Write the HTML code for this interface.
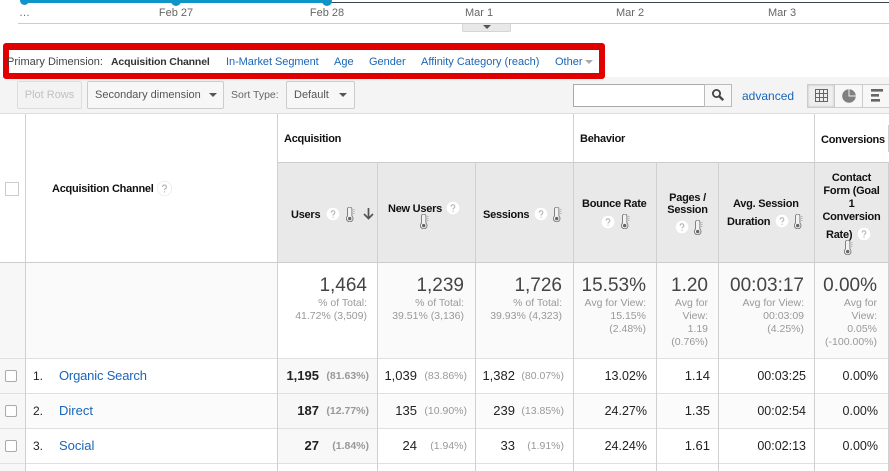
<!DOCTYPE html>
<html><head><meta charset="utf-8"><style>
html,body{margin:0;padding:0;background:#fff}
#p{position:relative;width:889px;height:471px;overflow:hidden;background:#fff;font-family:"Liberation Sans",Arial,sans-serif;color:#222}
#p div,#p span.a,#p svg.a{position:absolute}
.t{white-space:nowrap;line-height:14px;font-size:13px}
.b{font-weight:bold;font-size:11px;letter-spacing:-.25px;color:#111}
.c{text-align:center}
.ax{font-size:11px;color:#666;width:60px;text-align:center;top:6px}
.l{color:#1a66b8}
.rl{letter-spacing:-.18px}
.n{font-size:12.5px}
.big{font-size:19px;line-height:22px;color:#444;white-space:nowrap}
.sub{font-size:10.5px;line-height:13px;color:#999;text-align:right;white-space:nowrap}
.v{background:#d0d0d0;width:1px}
.h{background:#e0e0e0;height:1px;left:0;width:889px}
.pc{font-size:10.5px;color:#999;white-space:nowrap;line-height:14px}
.cb{width:10px;height:10px;border:1px solid #aaa;border-radius:2px;left:5px;background:#fff}
.btn{border:1px solid #ccc;border-radius:2px;box-sizing:border-box;height:28px;top:81px;font-size:11px;line-height:26px;color:#555;background:#f7f7f7}
.tri{width:0;height:0;border-left:4px solid transparent;border-right:4px solid transparent;border-top:4px solid #555}
</style></head><body><div id="p">
<svg width="0" height="0" style="position:absolute"><defs>
<symbol id="q" viewBox="0 0 14 14"><circle cx="7" cy="7" r="6.7" fill="#fff" stroke="#e6e6e6" stroke-width=".6"/><path d="M5.200 5.600a1.800 1.800 0 1 1 2.700 1.500c-.6.4-.9.7-.9 1.400" fill="none" stroke="#b0b0b0" stroke-width="1"/><circle cx="7" cy="10.200" r=".6" fill="#b0b0b0"/></symbol>
<symbol id="th" viewBox="0 0 9 15"><path d="M1.500 2.200a2.200 2.200 0 0 1 4.400 0v6.900a3.300 3.300 0 1 1-4.400 0z" fill="#f2f2f2" stroke="#777" stroke-width=".9"/><circle cx="3.700" cy="11.600" r="1.700" fill="#666"/><path d="M7 2.500h1.600M7 4.500h1.600M7 6.500h1.600" stroke="#aaa" stroke-width=".8"/></symbol>
</defs></svg>

<!-- chart -->
<div style="left:327px;top:2px;width:562px;height:1px;background:#3a4450"></div>
<div style="left:24px;top:0;width:303px;height:3px;background:#0f94c8"></div>
<div style="left:20px;top:-4px;width:9px;height:9px;border-radius:50%;background:#0f94c8"></div>
<div style="left:171px;top:-4px;width:10px;height:10px;border-radius:50%;background:#0f94c8"></div>
<div style="left:322px;top:-4px;width:10px;height:10px;border-radius:50%;background:#0f94c8"></div>
<div style="left:18px;top:23px;width:871px;height:1px;background:#ccc"></div>
<div class="t" style="left:19px;top:6px;font-size:11px;color:#666">…</div>
<div class="t ax" style="left:146px">Feb 27</div>
<div class="t ax" style="left:297px">Feb 28</div>
<div class="t ax" style="left:449px">Mar 1</div>
<div class="t ax" style="left:600px">Mar 2</div>
<div class="t ax" style="left:752px">Mar 3</div>
<div style="left:462px;top:24px;width:49px;height:8px;background:#e8e8e8;border:1px solid #d5d5d5;border-top:0;border-radius:0 0 2px 2px;box-sizing:border-box"></div>
<div class="tri" style="left:483px;top:25px;border-top-color:#555"></div>

<!-- toolbar -->
<div style="left:0;top:77px;width:889px;height:36px;background:#f4f4f4"></div>
<div style="left:0;top:113px;width:889px;height:1px;background:#ddd"></div>
<div class="btn c" style="left:17px;width:65px;color:#c0c0c0;background:#f3f3f3;border-color:#ddd;line-height:27px">Plot Rows</div>
<div class="btn" style="left:87px;width:137px;padding-left:7px">Secondary dimension</div>
<div class="tri" style="left:209px;top:93px"></div>
<div class="t" style="left:231px;top:88px;font-size:10.5px;color:#666">Sort Type:</div>
<div class="btn" style="left:286px;width:69px;padding-left:7px">Default</div>
<div class="tri" style="left:339px;top:93px"></div>
<div style="left:573px;top:84px;width:132px;height:23px;background:#fff;border:1px solid #aaa;box-sizing:border-box"></div>
<div style="left:704px;top:84px;width:28px;height:23px;background:#f7f7f7;border:1px solid #bbb;box-sizing:border-box"></div>
<svg class="a" style="left:711px;top:88px" width="14" height="14" viewBox="0 0 14 14"><circle cx="5.500" cy="5.500" r="3.600" fill="none" stroke="#444" stroke-width="1.800"/><path d="M8.200 8.200l4 4" stroke="#444" stroke-width="2.400"/></svg>
<div class="t l" style="left:742px;top:89px;font-size:12px">advanced</div>
<div style="left:807px;top:84px;width:28px;height:24px;background:#eee;border:1px solid #ccc;box-sizing:border-box;box-shadow:inset 0 0 2px #bbb"></div>
<div style="left:835px;top:84px;width:28px;height:24px;background:#f7f7f7;border:1px solid #ccc;border-left:0;box-sizing:border-box"></div>
<div style="left:863px;top:84px;width:26px;height:24px;background:#f7f7f7;border-top:1px solid #ccc;border-bottom:1px solid #ccc;box-sizing:border-box"></div>
<svg class="a" style="left:815px;top:89px" width="13" height="13" viewBox="0 0 13 13"><path d="M.5.5h12v12H.5zM.5 4.500h12M.5 8.500h12M4.500.5v12M8.500.5v12" fill="none" stroke="#666"/></svg>
<svg class="a" style="left:842px;top:89px" width="14" height="14" viewBox="0 0 14 14"><circle cx="7" cy="7" r="6.800" fill="#808080"/><path d="M7 0v7h7" fill="none" stroke="#eee" stroke-width="1"/></svg>
<svg class="a" style="left:871px;top:89px" width="12" height="13" viewBox="0 0 12 13"><path d="M0 0h12v2.600H0zM0 5h8v2.600H0zM0 10h9v2.600H0z" fill="#666"/></svg>

<!-- red box -->
<div style="left:3px;top:43px;width:602px;height:36px;box-sizing:border-box;border:solid #e00000;border-width:7px 6px 6px 6px;border-radius:3px;background:#fff"></div>
<div class="t" style="left:7px;top:55px;font-size:11px;color:#444">Primary Dimension:</div>
<div class="t" style="left:111px;top:55px;font-size:10.5px;letter-spacing:-.15px;font-weight:bold;color:#333">Acquisition Channel</div>
<div class="t l" style="left:226px;top:55px;font-size:11px;letter-spacing:-.05px">In-Market Segment</div>
<div class="t l" style="left:334px;top:55px;font-size:11px">Age</div>
<div class="t l" style="left:369px;top:55px;font-size:11px">Gender</div>
<div class="t l" style="left:421px;top:55px;font-size:11px">Affinity Category (reach)</div>
<div class="t l" style="left:555px;top:55px;font-size:11px">Other</div>
<div class="tri" style="left:585px;top:60px;border-top-color:#aaa"></div>

<!-- backgrounds -->
<div style="left:277px;top:162px;width:612px;height:100px;background:#e9e9e9"></div>
<div style="left:0;top:263px;width:277px;height:95px;background:#fafafa"></div>
<div style="left:377px;top:263px;width:512px;height:95px;background:#fafafa"></div>
<div style="left:0;top:114px;width:25px;height:148px;background:#fff"></div>
<div style="left:277px;top:359px;width:100px;height:34px;background:#f8f8f8"></div>
<div style="left:26px;top:394px;width:863px;height:34px;background:#fbfbfb"></div>
<div style="left:277px;top:394px;width:100px;height:34px;background:#f7f7f7"></div>
<div style="left:277px;top:429px;width:100px;height:34px;background:#f8f8f8"></div>
<div style="left:0;top:263px;width:25px;height:208px;background:#f7f7f7"></div>

<!-- lines -->
<div class="h" style="top:262px;background:#ccc"></div>
<div class="h" style="top:358px"></div>
<div class="h" style="top:393px"></div>
<div class="h" style="top:428px"></div>
<div class="h" style="top:463px"></div>
<div style="left:277px;top:162px;width:612px;height:1px;background:#ccc"></div>
<div class="v" style="left:25px;top:114px;height:357px"></div>
<div class="v" style="left:277px;top:114px;height:357px"></div>
<div class="v" style="left:377px;top:162px;height:309px"></div>
<div class="v" style="left:475px;top:162px;height:309px"></div>
<div class="v" style="left:573px;top:114px;height:357px"></div>
<div class="v" style="left:656px;top:162px;height:309px"></div>
<div class="v" style="left:718px;top:162px;height:309px"></div>
<div class="v" style="left:814px;top:114px;height:357px"></div>
<div class="v" style="left:888px;top:125px;height:27px"></div>
<div class="v" style="left:888px;top:162px;height:309px"></div>

<!-- header -->
<div style="left:5px;top:182px;width:12px;height:12px;border:1px solid #ccc;background:#fff"></div>
<div class="t b" style="left:52px;top:182px">Acquisition Channel</div>
<svg class="a" style="left:157px;top:181px" width="15" height="15"><use href="#q"/></svg>
<div class="t b" style="left:284px;top:132px">Acquisition</div>
<div class="t b" style="left:580px;top:132px">Behavior</div>
<div class="t b" style="left:821px;top:133px">Conversions</div>

<div class="t b" style="left:291px;top:208px">Users</div>
<svg class="a" style="left:326px;top:207px" width="14" height="14"><use href="#q"/></svg>
<svg class="a" style="left:346px;top:207px" width="9" height="15"><use href="#th"/></svg>
<svg class="a" style="left:363px;top:208px" width="11" height="12" viewBox="0 0 11 12"><path d="M5.500 0v10M1 6l4.500 4.500L10 6" fill="none" stroke="#555" stroke-width="1.700"/></svg>

<div class="t b" style="left:388px;top:202px">New Users</div>
<svg class="a" style="left:446px;top:201px" width="14" height="14"><use href="#q"/></svg>
<svg class="a" style="left:420px;top:214px" width="9" height="15"><use href="#th"/></svg>

<div class="t b" style="left:483px;top:208px">Sessions</div>
<svg class="a" style="left:534px;top:207px" width="14" height="14"><use href="#q"/></svg>
<svg class="a" style="left:553px;top:207px" width="9" height="15"><use href="#th"/></svg>

<div class="t b" style="left:582px;top:197px">Bounce Rate</div>
<svg class="a" style="left:601px;top:215px" width="14" height="14"><use href="#q"/></svg>
<svg class="a" style="left:621px;top:214px" width="9" height="15"><use href="#th"/></svg>

<div class="t b c" style="left:657px;top:191px;width:61px">Pages /</div>
<div class="t b c" style="left:657px;top:203px;width:61px">Session</div>
<svg class="a" style="left:675px;top:220px" width="14" height="14"><use href="#q"/></svg>
<svg class="a" style="left:694px;top:220px" width="9" height="15"><use href="#th"/></svg>

<div class="t b" style="left:733px;top:197px">Avg. Session</div>
<div class="t b" style="left:727px;top:215px">Duration</div>
<svg class="a" style="left:775px;top:214px" width="14" height="14"><use href="#q"/></svg>
<svg class="a" style="left:794px;top:214px" width="9" height="15"><use href="#th"/></svg>

<div class="t b c" style="left:815px;top:171px;width:73px">Contact</div>
<div class="t b c" style="left:815px;top:184px;width:73px">Form (Goal</div>
<div class="t b c" style="left:815px;top:197px;width:73px">1</div>
<div class="t b c" style="left:815px;top:210px;width:73px">Conversion</div>
<div class="t b" style="left:826px;top:228px">Rate)</div>
<svg class="a" style="left:857px;top:227px" width="14" height="14"><use href="#q"/></svg>
<svg class="a" style="left:844px;top:240px" width="9" height="15"><use href="#th"/></svg>

<!-- totals -->
<div class="big" style="right:522px;top:275px">1,464</div>
<div class="sub" style="right:522px;top:297px">% of Total:<br>41.72% (3,509)</div>
<div class="big" style="right:425px;top:275px">1,239</div>
<div class="sub" style="right:425px;top:297px">% of Total:<br>39.51% (3,136)</div>
<div class="big" style="right:327px;top:275px">1,726</div>
<div class="sub" style="right:327px;top:297px">% of Total:<br>39.93% (4,323)</div>
<div class="big" style="right:243px;top:275px">15.53%</div>
<div class="sub" style="right:243px;top:297px">Avg for View:<br>15.15%<br>(2.48%)</div>
<div class="big" style="right:181px;top:275px">1.20</div>
<div class="sub" style="right:181px;top:297px">Avg for<br>View:<br>1.19<br>(0.76%)</div>
<div class="big" style="right:85px;top:275px">00:03:17</div>
<div class="sub" style="right:85px;top:297px">Avg for View:<br>00:03:09<br>(4.25%)</div>
<div class="big" style="right:12px;top:275px">0.00%</div>
<div class="sub" style="right:12px;top:297px">Avg for<br>View:<br>0.05%<br>(-100.00%)</div>

<!-- row 1 -->
<div class="cb" style="top:370px"></div>
<div class="t" style="left:33px;top:369px;font-size:12px">1.</div>
<div class="t l rl" style="left:59px;top:369px">Organic Search</div>
<div class="t" style="right:570px;top:369px;font-weight:bold">1,195</div>
<div class="pc" style="right:520px;top:369px;font-weight:bold">(81.63%)</div>
<div class="t" style="right:472px;top:369px">1,039</div>
<div class="pc" style="right:422px;top:369px">(83.86%)</div>
<div class="t" style="right:374px;top:369px">1,382</div>
<div class="pc" style="right:325px;top:369px">(80.07%)</div>
<div class="t n" style="right:242px;top:369px">13.02%</div>
<div class="t" style="right:179px;top:369px">1.14</div>
<div class="t n" style="right:83px;top:369px">00:03:25</div>
<div class="t n" style="right:11px;top:369px">0.00%</div>

<!-- row 2 -->
<div class="cb" style="top:405px"></div>
<div class="t" style="left:33px;top:404px;font-size:12px">2.</div>
<div class="t l" style="left:59px;top:404px">Direct</div>
<div class="t" style="right:570px;top:404px;font-weight:bold">187</div>
<div class="pc" style="right:520px;top:404px;font-weight:bold">(12.77%)</div>
<div class="t" style="right:472px;top:404px">135</div>
<div class="pc" style="right:422px;top:404px">(10.90%)</div>
<div class="t" style="right:374px;top:404px">239</div>
<div class="pc" style="right:325px;top:404px">(13.85%)</div>
<div class="t n" style="right:242px;top:404px">24.27%</div>
<div class="t" style="right:179px;top:404px">1.35</div>
<div class="t n" style="right:83px;top:404px">00:02:54</div>
<div class="t n" style="right:11px;top:404px">0.00%</div>

<!-- row 3 -->
<div class="cb" style="top:440px"></div>
<div class="t" style="left:33px;top:439px;font-size:12px">3.</div>
<div class="t l" style="left:59px;top:439px">Social</div>
<div class="t" style="right:570px;top:439px;font-weight:bold">27</div>
<div class="pc" style="right:520px;top:439px;font-weight:bold">(1.84%)</div>
<div class="t" style="right:472px;top:439px">24</div>
<div class="pc" style="right:422px;top:439px">(1.94%)</div>
<div class="t" style="right:374px;top:439px">33</div>
<div class="pc" style="right:325px;top:439px">(1.91%)</div>
<div class="t n" style="right:242px;top:439px">24.24%</div>
<div class="t" style="right:179px;top:439px">1.61</div>
<div class="t n" style="right:83px;top:439px">00:02:13</div>
<div class="t n" style="right:11px;top:439px">0.00%</div>
</div></body></html>
